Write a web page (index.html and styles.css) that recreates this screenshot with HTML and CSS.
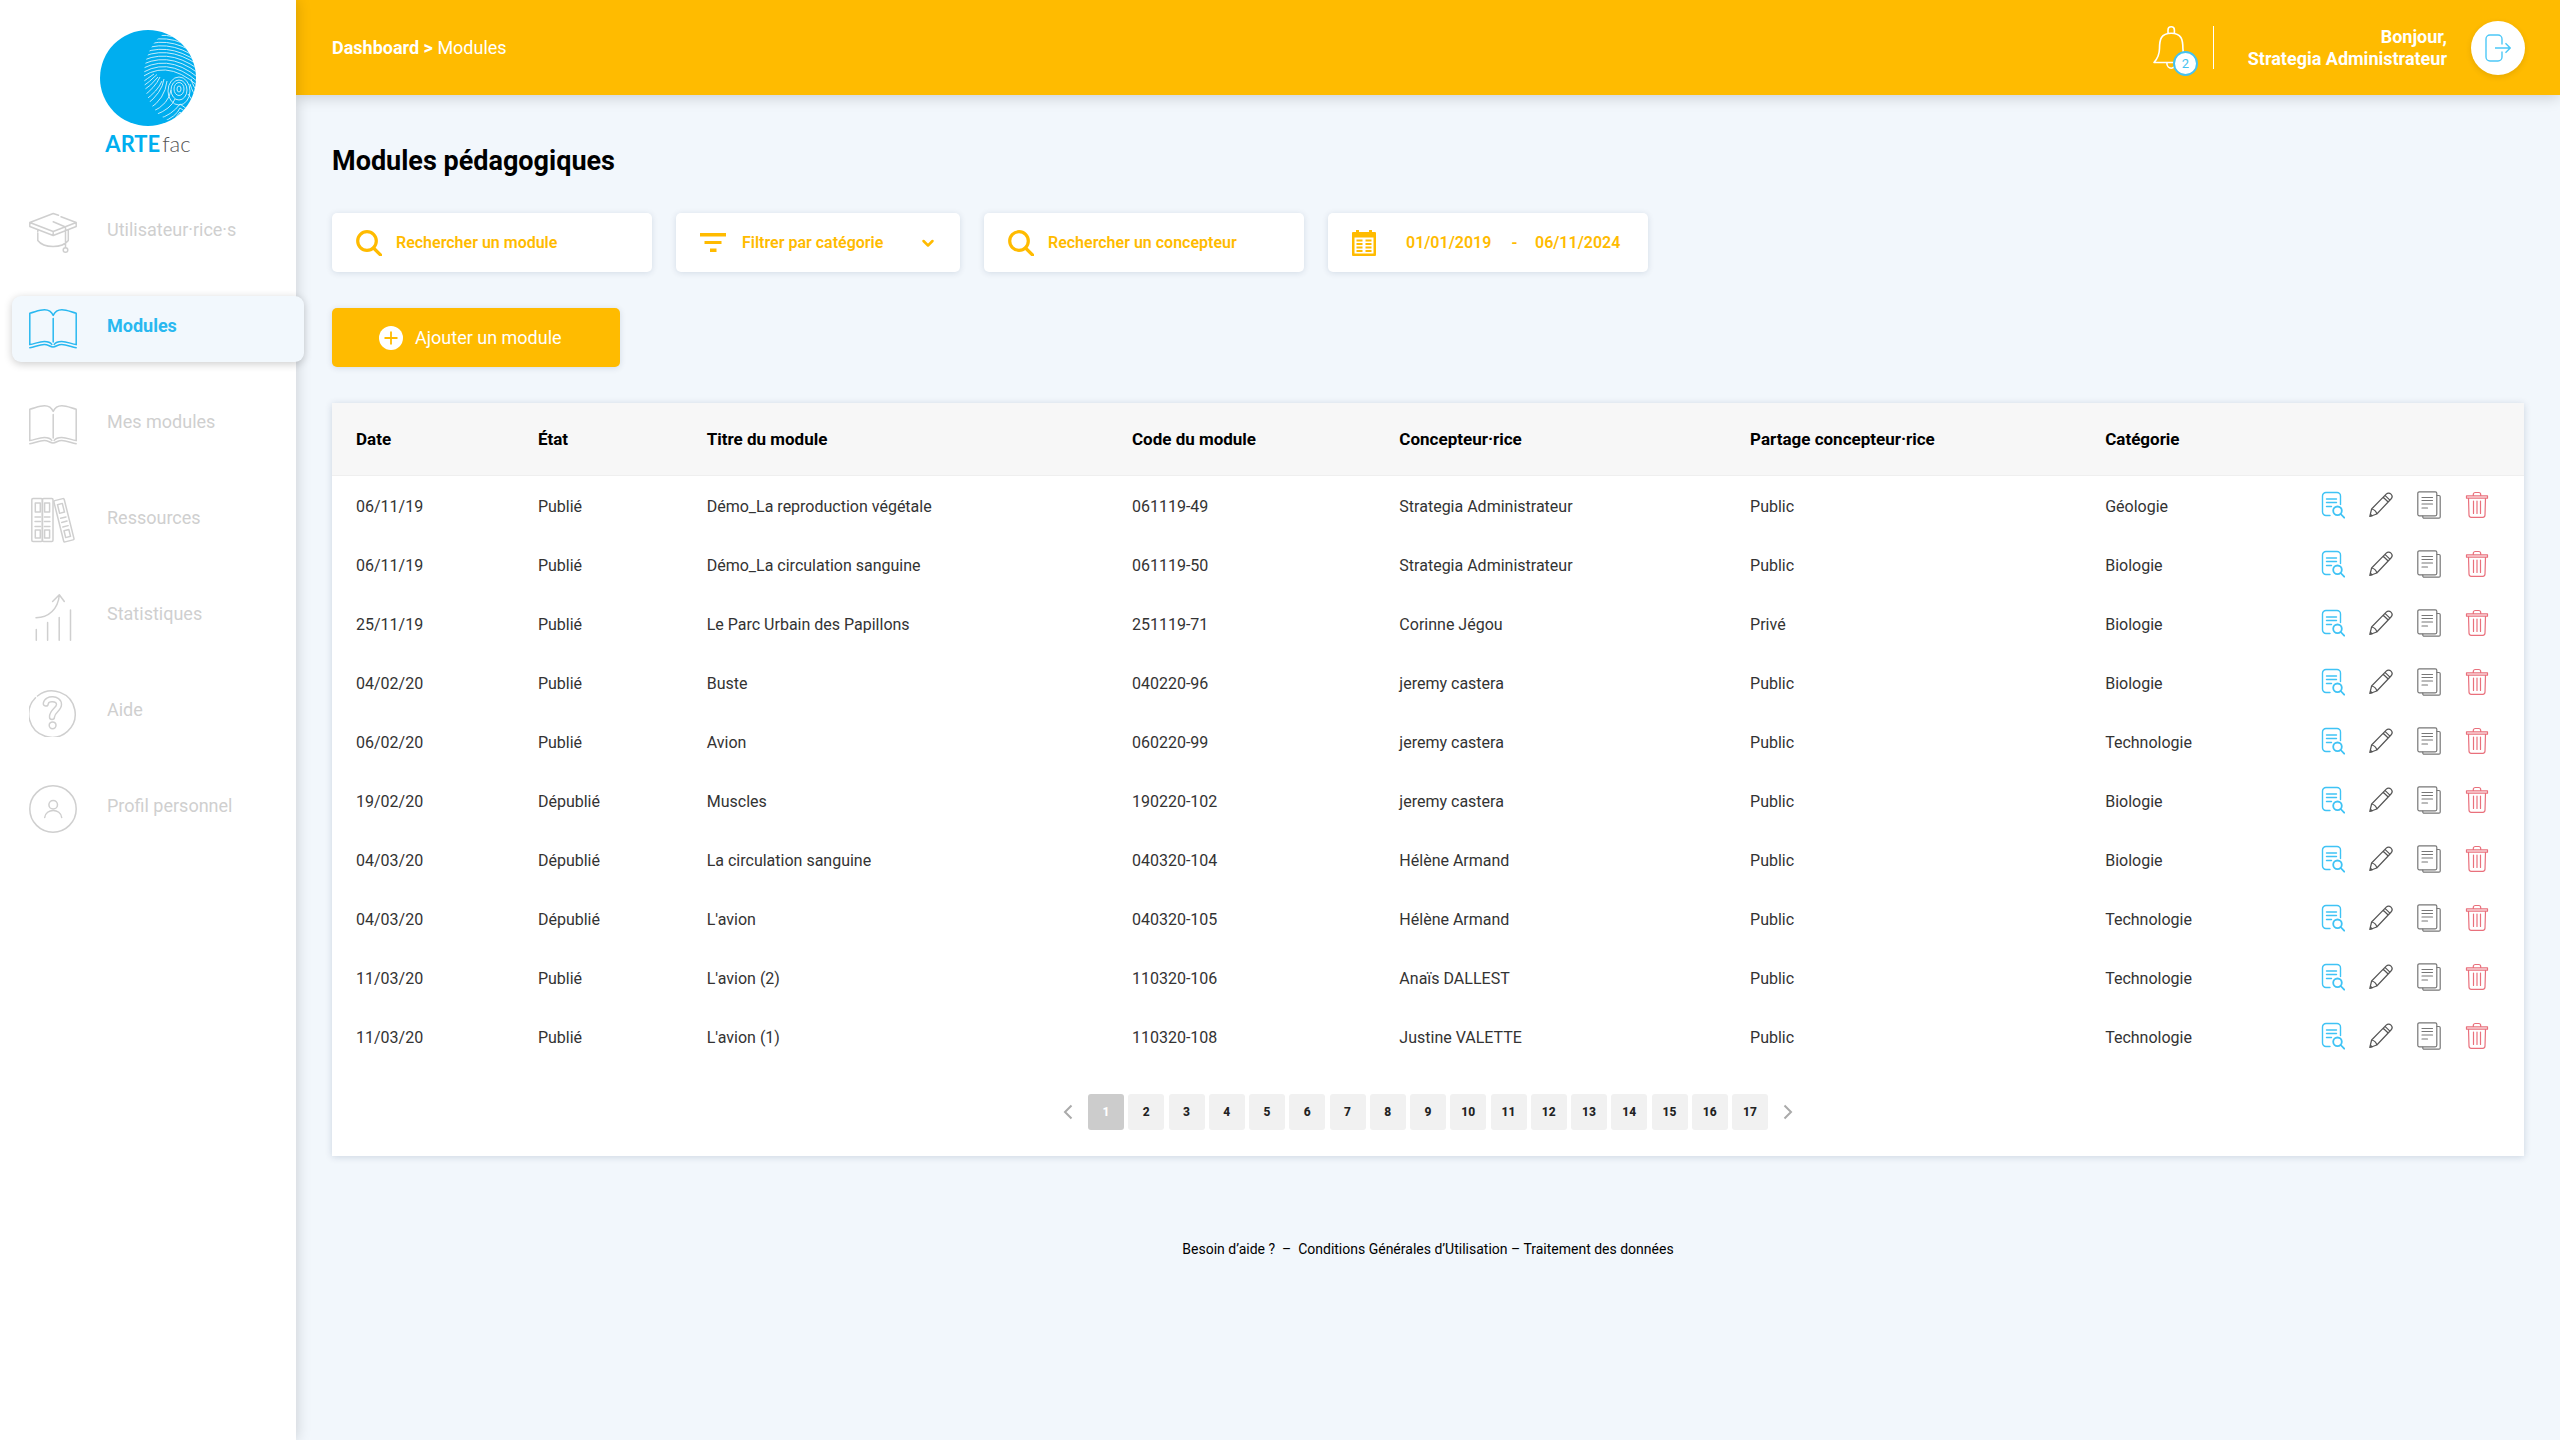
FILE: index.html
```html
<!DOCTYPE html>
<html lang="fr">
<head>
<meta charset="utf-8">
<meta name="viewport" content="width=device-width, initial-scale=1">
<title>ARTEfac - Modules pédagogiques</title>
<link rel="stylesheet" href="styles.css">
</head>
<body>
<svg class="sprite" aria-hidden="true">
  <symbol id="i-book" viewBox="0 0 48 48">
    <path d="M.8 39.6V8.2C6 7 10.500 4.800 15.500 4.800c4.200 0 7 1.700 8.700 5.600 1.700-3.900 4.500-5.600 8.700-5.600 5 0 9.300 2.200 14.300 3.400v31.400"/>
    <path d="M24.200 13.500v23.500M.8 39.600c5-.8 9.500-3.200 14.500-3.200 3.500 0 5.900.6 7.500 3M47.200 39.600c-5-.8-9.500-3.200-14.500-3.200-3.500 0-5.900.6-7.500 3"/>
    <path d="M.8 42.700c5-.8 9.500-3.200 14.500-3.200 4 0 5.500 2.400 8.700 2.400s4.700-2.400 8.700-2.400c5 0 9.500 2.400 14.500 3.200"/>
  </symbol>
  <symbol id="i-view" viewBox="0 0 24 28">
    <path d="M9 24.500H5a3.500 3.500 0 0 1-3.500-3.500V5A3.500 3.500 0 0 1 5 1.500h11A3.500 3.500 0 0 1 19.500 5v8.500M5.500 8h10M5.500 11.500h10M5.500 15.500h5"/>
    <circle cx="16.500" cy="19.800" r="4.300" stroke-width="1.800"/><path d="M19.700 23l3.500 3.700" stroke-width="1.800"/>
  </symbol>
  <symbol id="i-edit" viewBox="0 0 24 28">
    <path d="M.8 25.500l1.800-7.500L17.200 3.200c1.500-1.500 3.400-1.400 4.800 0s1.500 3.300 0 4.800L7.800 23zM2.600 18c2.200.4 4.600 2.600 5.200 5M14.200 6.200l5 4.800M16 4.400l4.900 4.700M.8 25.500l2.400-.6-1.800-1.800z"/>
  </symbol>
  <symbol id="i-copy" viewBox="0 0 24 28">
    <rect x=".8" y=".8" width="19" height="24" rx="1.500"/>
    <path d="M20 4.500h2a1.200 1.200 0 0 1 1.200 1.200V26a1.200 1.200 0 0 1-1.200 1.200H7A1.200 1.200 0 0 1 5.800 26v-1M5 6.500h10.500M5 9.500h10.500M5 13h10.500M5 17h5.500"/>
  </symbol>
  <symbol id="i-trash" viewBox="0 0 24 28">
    <path d="M8.300 4.500V3.500c0-1.200.8-2 2-2h3.400c1.200 0 2 .8 2 2v1M1.500 4.800h21v2.400h-21zM3.500 7.200l.5 16.900c0 1.300.9 2.200 2.200 2.200h11.600c1.300 0 2.200-.9 2.200-2.200l.5-16.900"/>
    <path class="bars" d="M8.500 10v12.500M12 10v12.500M15.500 10v12.500"/>
  </symbol>
  <symbol id="i-search" viewBox="0 0 26 26">
    <circle cx="11" cy="11" r="9.300"/><path d="M17.500 18l7 7"/>
  </symbol>
</svg>

<div class="app">
  <aside class="sidebar">
    <a class="logo" href="#">
      <svg class="logo-mark" viewBox="0 0 96 96" aria-hidden="true">
        <defs>
          <clipPath id="disc"><circle cx="48" cy="48" r="48"/></clipPath>
          <clipPath id="print"><ellipse cx="77" cy="46" rx="33" ry="46"/></clipPath>
        </defs>
        <circle cx="48" cy="48" r="48" fill="#00aeef"/>
        <g clip-path="url(#disc)"><g clip-path="url(#print)" fill="none" stroke="#fff" stroke-width=".9" opacity=".85">
          <path d="M36 8q30-16 62 6M36 12q30-16 62 6M36 15.500q30-16 62 6M36 19q30-16 62 6M36 22.500q30-16 62 6M36 26q30-16 62 6M36 30q30-17 62 5M36 34q30-18 62 5M36 38q30-19 62 5M36 42.500q30-21 62 5M36 47q30-23 62 5M36 52q28-26 62 4"/>
          <path d="M40 54q8-6 14-10M40 58.500q10-7 17-14M40 63q12-8 18-16M42 67q13-9 18-20M44 71q14-10 18-20M46 75q16-12 18-26M49 79q16-10 18-28M52 82q17-8 19-22M55 85q16-6 20-16"/>
          <ellipse cx="79" cy="59" rx="2" ry="3"/><ellipse cx="79" cy="59" rx="5" ry="6.500"/><ellipse cx="79" cy="60" rx="8" ry="10"/><ellipse cx="79" cy="61" rx="11" ry="14"/>
          <path d="M58 89q14-4 22-15 6 6 16 8M62 92q14-5 18-14 5 5 14 6M68 93q8-4 12-11 4 5 12 5M90 54q3 10 7 12M91 49q3 10 7 12M88 64q3 6 8 8"/>
        </g></g>
      </svg>
      <span class="logo-text"><b>ARTE</b><span>fac</span></span>
    </a>
    <nav class="nav" aria-label="Menu principal">
      <a class="nav-item" href="#">
        <svg class="nav-icon" viewBox="0 0 48 48" aria-hidden="true"><path d="M29.500 6.200L24.200 4.500.8 13.500v4L24.200 26.500l23-9v-4L32 7.800M.8 13.500l23.400 9 23-9M24.200 22.500v4M24.200 12.800L36.500 18v20.500M8.800 24v7.500c6 8 24.500 8 30.500 0V21M8.800 21v1.500"/><circle cx="36.500" cy="41" r="2.300"/></svg>
        <span>Utilisateur·rice·s</span></a>
      <a class="nav-item active" href="#" aria-current="page">
        <svg class="nav-icon" aria-hidden="true"><use href="#i-book"/></svg>
        <span>Modules</span></a>
      <a class="nav-item" href="#">
        <svg class="nav-icon" aria-hidden="true"><use href="#i-book"/></svg>
        <span>Mes modules</span></a>
      <a class="nav-item" href="#">
        <svg class="nav-icon" viewBox="0 0 48 48" aria-hidden="true"><g><rect x="2.800" y="1.500" width="10.600" height="43" rx="1.200"/><rect x="6.300" y="6" width="5" height="9"/><path d="M6 20h5.500M6 24.500h5.500M6 29.500h5.500"/><rect x="6.300" y="33" width="5" height="8"/></g><g><rect x="13.400" y="1.500" width="10.600" height="43" rx="1.200"/><rect x="15.600" y="6" width="5" height="9"/><path d="M15.400 20h5.500M15.400 24.500h5.500M15.400 29.500h5.500"/><rect x="15.600" y="33" width="5" height="8"/></g><g transform="rotate(-14 35 23.500)"><rect x="29.700" y="2" width="10.600" height="42.500" rx="1.200"/><rect x="32.500" y="6.500" width="5" height="9"/><path d="M32.300 20.500h5.500M32.300 24.800h5.500M32.300 29.500h5.500"/><rect x="32.500" y="33.500" width="5" height="7"/></g></svg>
        <span>Ressources</span></a>
      <a class="nav-item" href="#">
        <svg class="nav-icon" viewBox="0 0 48 48" aria-hidden="true"><path d="M7 24.700c13 0 22-9 23.300-22.500M23.600 8.500l6.700-6.700 5 6.700M7.300 36.500v10.700M18.600 29.500v17.700M30.200 24.500v22.700M41.500 17v30.200"/></svg>
        <span>Statistiques</span></a>
      <a class="nav-item" href="#">
        <svg class="nav-icon" viewBox="0 0 48 48" aria-hidden="true"><path d="M8.500 7A23.200 23.200 0 1 1 6.500 8.800"/><path d="M16.800 14.500C17.500 8.600 30 8.800 30 15.500c0 5-7 6.500-7 12.500" stroke-width="6.400"/><path class="hollow" d="M16.800 14.500C17.500 8.600 30 8.800 30 15.500c0 5-7 6.500-7 12.500" stroke-width="3.600"/><circle cx="23.600" cy="36.300" r="3.400"/></svg>
        <span>Aide</span></a>
      <a class="nav-item" href="#">
        <svg class="nav-icon" viewBox="0 0 48 48" aria-hidden="true"><circle cx="24" cy="24" r="23.200"/><circle cx="24.200" cy="19.700" r="4.300"/><path d="M15.700 32.500c1-9.300 16-9.300 17 0"/></svg>
        <span>Profil personnel</span></a>
    </nav>
  </aside>

  <div class="page">
    <header class="topbar">
      <nav class="breadcrumb" aria-label="Fil d'Ariane"><a href="#">Dashboard</a> <b>&gt;</b> <span>Modules</span></nav>
      <div class="topbar-right">
        <button class="bell" type="button" aria-label="Notifications">
          <svg viewBox="0 0 36 44" aria-hidden="true"><path d="M15 7.500V4a3.200 3.200 0 0 1 6.400 0v3.500M1 36.500c4-4.500 5.500-8.500 5.500-14 0-9 1.500-15.300 11.700-15.300s11.700 6.300 11.700 15.300c0 5.500 1.500 9.500 5.500 14zM13.800 36.500c0 7.600 8.800 7.600 8.800 0"/></svg>
          <span class="badge">2</span>
        </button>
        <span class="divider"></span>
        <p class="user">Bonjour,<br>Strategia Administrateur</p>
        <button class="logout" type="button" aria-label="Déconnexion">
          <svg viewBox="0 0 26 28" aria-hidden="true"><path d="M17 10.500V5a4 4 0 0 0-4-4H5a4 4 0 0 0-4 4v18a4 4 0 0 0 4 4h8a4 4 0 0 0 4-4v-5.500M10 14h15M20.500 9.300l4.700 4.700-4.700 4.700"/></svg>
        </button>
      </div>
    </header>

    <main class="content">
      <h1>Modules pédagogiques</h1>

      <form class="filters">
        <label class="field">
          <svg class="search-icon" aria-hidden="true"><use href="#i-search"/></svg>
          <input type="text" placeholder="Rechercher un module" aria-label="Rechercher un module">
        </label>
        <label class="field field-select">
          <svg class="filter-icon" viewBox="0 0 26 20" aria-hidden="true"><path d="M0 0h26v3.500H0zM4.500 8h17v3H4.500zM10 15.500h6.500V19H10z"/></svg>
          <select aria-label="Filtrer par catégorie"><option>Filtrer par catégorie</option><option>Biologie</option><option>Géologie</option><option>Technologie</option></select>
          <svg class="chevron" viewBox="0 0 16 16" aria-hidden="true"><path d="M3.500 6L8 10.500 12.500 6"/></svg>
        </label>
        <label class="field">
          <svg class="search-icon" aria-hidden="true"><use href="#i-search"/></svg>
          <input type="text" placeholder="Rechercher un concepteur" aria-label="Rechercher un concepteur">
        </label>
        <div class="field field-dates">
          <svg class="calendar" viewBox="0 0 24 26" aria-hidden="true"><path fill-rule="evenodd" d="M1 2h3V.8a1.500 1.500 0 0 1 3 0V2h10V.8a1.500 1.500 0 0 1 3 0V2h3a1 1 0 0 1 1 1v22a1 1 0 0 1-1 1H1a1 1 0 0 1-1-1V3a1 1 0 0 1 1-1zm1.500 5.500v16h19v-16z"/><path d="M4.500 9.500h6v2h-6zM13.500 9.500h6v2h-6zM4.500 13h6v2h-6zM13.500 13h6v2h-6zM4.500 16.500h6v2h-6zM13.500 16.500h6v2h-6zM4.500 20h6v2h-6zM13.500 20h6v2h-6z"/></svg>
          <input type="text" value="01/01/2019" aria-label="Date de début">
          <span class="dash">-</span>
          <input type="text" value="06/11/2024" aria-label="Date de fin">
        </div>
      </form>

      <button class="add" type="button">
        <svg viewBox="0 0 24 24" aria-hidden="true"><circle cx="12" cy="12" r="12"/><path d="M12 5.500v13M5.500 12h13"/></svg>
        Ajouter un module
      </button>

      <section class="card">
        <table class="modules">
          <colgroup><col class="c-date"><col class="c-state"><col class="c-title"><col class="c-code"><col class="c-author"><col class="c-share"><col class="c-cat"><col></colgroup>
          <thead>
            <tr><th>Date</th><th>État</th><th>Titre du module</th><th>Code du module</th><th>Concepteur·rice</th><th>Partage concepteur·rice</th><th>Catégorie</th><th></th></tr>
          </thead>
          <tbody id="rows"></tbody>
        </table>

        <nav class="pagination" aria-label="Pagination">
          <button class="arrow" type="button" aria-label="Page précédente"><svg viewBox="0 0 10 16" aria-hidden="true"><path d="M8.500 1.500L2 8l6.500 6.500"/></svg></button>
          <div class="pages" id="pages"></div>
          <button class="arrow" type="button" aria-label="Page suivante"><svg viewBox="0 0 10 16" aria-hidden="true"><path d="M1.500 1.500L8 8l-6.500 6.500"/></svg></button>
        </nav>
      </section>

      <footer class="footer">
        <a href="#">Besoin d’aide ?</a>&nbsp; –&nbsp; <a href="#">Conditions Générales d’Utilisation</a> – <a href="#">Traitement des données</a>
      </footer>
    </main>
  </div>
</div>
<script src="modules.js"></script>
</body>
</html>
```
FILE: modules.js
```js
const modules = [
  ["06/11/19", "Publié", "Démo_La reproduction végétale", "061119-49", "Strategia Administrateur", "Public", "Géologie"],
  ["06/11/19", "Publié", "Démo_La circulation sanguine", "061119-50", "Strategia Administrateur", "Public", "Biologie"],
  ["25/11/19", "Publié", "Le Parc Urbain des Papillons", "251119-71", "Corinne Jégou", "Privé", "Biologie"],
  ["04/02/20", "Publié", "Buste", "040220-96", "jeremy castera", "Public", "Biologie"],
  ["06/02/20", "Publié", "Avion", "060220-99", "jeremy castera", "Public", "Technologie"],
  ["19/02/20", "Dépublié", "Muscles", "190220-102", "jeremy castera", "Public", "Biologie"],
  ["04/03/20", "Dépublié", "La circulation sanguine", "040320-104", "Hélène Armand", "Public", "Biologie"],
  ["04/03/20", "Dépublié", "L'avion", "040320-105", "Hélène Armand", "Public", "Technologie"],
  ["11/03/20", "Publié", "L'avion (2)", "110320-106", "Anaïs DALLEST", "Public", "Technologie"],
  ["11/03/20", "Publié", "L'avion (1)", "110320-108", "Justine VALETTE", "Public", "Technologie"]
];

const actions = [
  ["view", "Consulter"],
  ["edit", "Modifier"],
  ["copy", "Dupliquer"],
  ["trash", "Supprimer"]
];

const actionButtons = actions.map(([icon, label]) =>
  `<button class="action ${icon}" type="button" aria-label="${label}"><svg aria-hidden="true"><use href="#i-${icon}"/></svg></button>`
).join("");

document.getElementById("rows").innerHTML = modules.map(row =>
  `<tr>${row.map(cell => `<td>${cell}</td>`).join("")}<td class="actions-cell"><div class="actions">${actionButtons}</div></td></tr>`
).join("");

document.getElementById("pages").innerHTML = Array.from({ length: 17 }, (_, i) =>
  `<button class="page-number${i === 0 ? " current" : ""}" type="button">${i + 1}</button>`
).join("");
```
FILE: styles.css
```css
* { box-sizing: border-box; }

body {
  margin: 0;
  background: #f2f7fc;
  color: #000;
  font-family: Roboto, "Open Sans", sans-serif;
  font-size: 16px;
}

a { color: inherit; text-decoration: none; }
button, input, select { font: inherit; color: inherit; }
button { border: 0; padding: 0; background: none; cursor: pointer; }
svg { display: block; flex: none; fill: none; stroke: currentColor; }
.sprite { position: absolute; width: 0; height: 0; }

.app { display: flex; min-height: 100vh; }

/* Sidebar */
.sidebar {
  position: relative;
  z-index: 2;
  flex: none;
  width: 296px;
  padding-top: 30px;
  background: #fff;
  box-shadow: 0 0 14px rgba(0, 0, 0, .18);
}
.logo { display: flex; flex-direction: column; align-items: center; gap: 4px; }
.logo-mark { width: 96px; height: 96px; stroke: none; }
.logo-text {
  display: flex;
  align-items: baseline;
  gap: 2px;
  font-family: Lato, sans-serif;
  font-size: 22px;
  line-height: 28px;
  color: #555;
}
.logo-text b { color: #00aeef; font-weight: 700; }
.logo-text span { font-weight: 300; }

.nav { display: flex; flex-direction: column; gap: 30px; margin-top: 42px; padding-left: 12px; }
.nav-item {
  display: flex;
  align-items: center;
  gap: 30px;
  width: 292px;
  height: 66px;
  padding-left: 17px;
  border-radius: 9px;
  color: #cfcfcf;
  font-size: 18px;
}
.nav-item span { padding-bottom: 7px; }
.nav-item.active {
  background: #f2f8fd;
  box-shadow: 0 2px 9px rgba(0, 0, 0, .2);
  color: #29b8f0;
  font-weight: 700;
}
.nav-icon { width: 48px; height: 48px; stroke-width: 1.5px; stroke-linecap: round; stroke-linejoin: round; }
.nav-icon .hollow { stroke: #fff; }

/* Top bar */
.page { flex: 1; min-width: 0; }
.topbar {
  display: flex;
  align-items: center;
  justify-content: space-between;
  height: 95px;
  padding: 0 35px 0 36px;
  background: #fb0;
  color: #fff;
  box-shadow: 0 2px 14px rgba(0, 0, 0, .18);
}
.breadcrumb { font-size: 18px; }
.breadcrumb a { font-weight: 700; }
.topbar-right { display: flex; align-items: center; gap: 24px; }
.bell { position: relative; width: 36px; height: 44px; }
.bell svg { width: 36px; height: 44px; stroke-width: 1.600px; stroke-linejoin: round; }
.badge {
  position: absolute;
  left: 20px;
  top: 25px;
  width: 25px;
  height: 25px;
  border: 2px solid #45c2ef;
  border-radius: 50%;
  background: #fff;
  color: #45c2ef;
  font-size: 13px;
  line-height: 22px;
  text-align: center;
}
.divider { width: 1px; height: 43px; background: #fff; }
.user {
  min-width: 209px;
  margin: 0;
  font-size: 18px;
  font-weight: 700;
  line-height: 22px;
  text-align: right;
}
.logout {
  display: flex;
  align-items: center;
  justify-content: center;
  width: 54px;
  height: 54px;
  border-radius: 50%;
  background: #fff;
  color: #4cc8f7;
  box-shadow: 0 2px 6px rgba(0, 0, 0, .1);
}
.logout svg { width: 26px; height: 28px; stroke-width: 1.400px; }

/* Content */
.content { padding: 50px 36px 36px; }
h1 { margin: 0 0 36px; font-size: 27px; line-height: 32px; font-weight: 700; }

.filters { display: flex; flex-wrap: wrap; gap: 24px; margin-bottom: 36px; }
.field {
  display: flex;
  align-items: center;
  gap: 14px;
  width: 320px;
  height: 59px;
  padding: 0 24px;
  border-radius: 5px;
  background: #fff;
  box-shadow: 0 1px 6px rgba(0, 40, 80, .13);
  color: #fb0;
  font-weight: 600;
}
.field input, .field select {
  flex: 1;
  min-width: 0;
  padding: 0;
  border: 0;
  outline: 0;
  background: none;
  appearance: none;
}
.field input::placeholder { color: #fb0; opacity: 1; }
.field-select { width: 284px; gap: 16px; }
.field-dates { gap: 0; }
.field-dates input { flex: none; width: 88px; }
.search-icon { width: 26px; height: 26px; stroke-width: 3.200px; stroke-linecap: round; }
.filter-icon { width: 26px; height: 20px; fill: currentColor; stroke: none; }
.chevron { width: 16px; height: 16px; stroke-width: 2.500px; stroke-linecap: round; stroke-linejoin: round; }
.calendar { width: 24px; height: 26px; margin-right: 30px; fill: currentColor; stroke: none; }
.dash { width: 41px; text-align: center; }

.add {
  display: flex;
  align-items: center;
  gap: 12px;
  width: 288px;
  height: 59px;
  margin-bottom: 36px;
  padding-left: 47px;
  border-radius: 5px;
  background: #fb0;
  box-shadow: 0 1px 6px rgba(0, 40, 80, .13);
  color: #fff;
  font-size: 18px;
}
.add svg { width: 24px; height: 24px; fill: #fff; stroke: #fb0; stroke-width: 1.800px; }
.add circle { stroke: none; }

/* Modules table */
.card { padding-bottom: 26px; background: #fff; box-shadow: 0 1px 7px rgba(0, 40, 80, .16); }
.modules { width: 100%; table-layout: fixed; border-collapse: collapse; text-align: left; }
.c-date { width: 8.3%; }
.c-state { width: 7.7%; }
.c-title { width: 19.4%; }
.c-code { width: 12.2%; }
.c-author { width: 16%; }
.c-share { width: 16.2%; }
.c-cat { width: 8.2%; }
.modules th {
  height: 72px;
  padding: 0 0 0 24px;
  border-bottom: 1px solid #efefef;
  background: #f7f7f7;
  font-size: 17px;
  font-weight: 700;
  white-space: nowrap;
}
.modules td { height: 59px; padding: 4px 0 0 24px; color: #333; white-space: nowrap; }
.modules .actions-cell { padding: 0 35px 0 0; }
.actions { display: flex; justify-content: flex-end; gap: 24px; }
.action svg { width: 24px; height: 28px; stroke-width: 1.200px; stroke-linecap: round; stroke-linejoin: round; }
.view { color: #3fc3f5; }
.view svg { stroke-width: 1.400px; }
.edit { color: #555; }
.copy { color: #777; }
.trash { color: #e9707c; }

.pagination { display: flex; align-items: center; justify-content: center; gap: 15px; padding-top: 29px; }
.pages { display: flex; justify-content: space-between; width: 680px; }
.page-number {
  width: 36px;
  height: 36px;
  border-radius: 3px;
  background: #f1f1f1;
  color: #222;
  font-size: 12px;
  font-weight: 800;
}
.page-number.current { background: #ccc; color: #fff; }
.arrow { color: #aaa; }
.arrow svg { width: 10px; height: 16px; stroke-width: 2px; }

.footer { margin-top: 83px; font-size: 14px; line-height: 20px; text-align: center; }
```
